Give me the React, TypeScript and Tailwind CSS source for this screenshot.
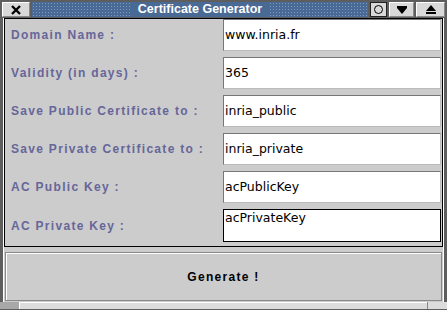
import React from 'react';

const rows = [
  { label: 'Domain Name :', value: 'www.inria.fr' },
  { label: 'Validity (in days) :', value: '365' },
  { label: 'Save Public Certificate to :', value: 'inria_public' },
  { label: 'Save Private Certificate to :', value: 'inria_private' },
  { label: 'AC Public Key :', value: 'acPublicKey' },
];

const dots =
  'bg-[#4a6a96] bg-[radial-gradient(circle,#7d9ac4_0.8px,transparent_1px)] bg-[length:3px_3px]';

const App = () => {
  return (
    <div className="w-[447px] h-[310px] bg-[#5e5e5e] flex flex-col overflow-hidden font-['Liberation_Sans',sans-serif]">
      {/* Title bar */}
      <div className="h-[18px] flex items-stretch pt-[2px] pb-[1px] px-[2px] gap-[2px] bg-[#5e5e5e]">
        <div className="w-[28px] bg-[#d9d9d9] border-t border-l border-white border-b border-r border-b-[#888] border-r-[#888] flex items-center justify-center">
          <svg width="10" height="10" viewBox="0 0 10 10">
            <path d="M1 1 L9 9 M9 1 L1 9" stroke="#000" strokeWidth="2.4" />
          </svg>
        </div>
        <div className={`flex-1 flex items-center justify-center ${dots}`}>
          <div className="bg-[#4a6a96] px-[6px] h-full flex items-center text-white font-bold text-[12.5px] leading-none">
            Certificate Generator
          </div>
        </div>
        <div className="w-[17px] bg-[#d9d9d9] border border-[#222] flex items-center justify-center">
          <div className="w-[9px] h-[9px] rounded-full border border-black" />
        </div>
        <div className="w-[25px] bg-[#d9d9d9] border-t border-l border-white border-b border-r border-b-[#888] border-r-[#888] flex flex-col items-center justify-center">
          <div className="w-[10px] h-[2px] bg-black" />
          <svg width="10" height="6" viewBox="0 0 10 6">
            <path d="M0 0 L10 0 L5 6 Z" fill="#000" />
          </svg>
        </div>
        <div className="w-[29px] bg-[#d9d9d9] border-t border-l border-white border-b border-r border-b-[#888] border-r-[#888] flex flex-col items-center justify-center">
          <svg width="10" height="6" viewBox="0 0 10 6">
            <path d="M0 6 L10 6 L5 0 Z" fill="#000" />
          </svg>
          <div className="w-[10px] h-[2px] bg-black mt-[1px]" />
        </div>
      </div>

      {/* Body */}
      <div className="flex-1 mx-[3px] border-l border-r border-white bg-[#cccccc] flex flex-col">
        <div className="border border-black bg-[#cccccc] flex flex-col gap-[6px] pr-[1px] pb-[4px]">
          {rows.map((row) => (
            <div key={row.label} className="h-[32px] flex items-center">
              <div className="w-[218px] pl-[6px] text-[#666699] font-bold text-[12px] tracking-[1.3px]">
                {row.label}
              </div>
              <div className="flex-1 h-full bg-white border-t border-l border-[#777] border-b border-r border-b-[#bbb] border-r-[#bbb] flex items-center pl-[1px] text-black text-[12.5px] font-['DejaVu_Sans',sans-serif]">
                {row.value}
              </div>
            </div>
          ))}
          <div className="h-[33px] flex items-center">
            <div className="w-[218px] pl-[6px] text-[#666699] font-bold text-[12px] tracking-[1.3px]">
              AC Private Key :
            </div>
            <div className="flex-1 h-full bg-white border border-black pl-[1px] pt-[1px] text-black text-[12.5px] leading-[14px] font-['DejaVu_Sans',sans-serif]">
              acPrivateKey
            </div>
          </div>
        </div>

        <div className="flex-1 pt-[5px] px-[1px] pb-[1px] flex">
          <button className="flex-1 border border-[#888] shadow-[inset_1px_1px_0_#fff] bg-[#cccccc] flex items-center justify-center text-black font-bold text-[12px] tracking-[1.3px]">
            Generate !
          </button>
        </div>
      </div>

      {/* Bottom grip */}
      <div className="h-[8px] flex bg-[#5e5e5e] pb-[1px]">
        <div className="w-[20px] bg-[#a8a8a8] border-r border-white" />
        <div className="flex-1 bg-[#dcdcdc] border-t border-white" />
        <div className="w-[20px] bg-[#dcdcdc] border-l border-[#888]" />
      </div>
    </div>
  );
};

export default App;
